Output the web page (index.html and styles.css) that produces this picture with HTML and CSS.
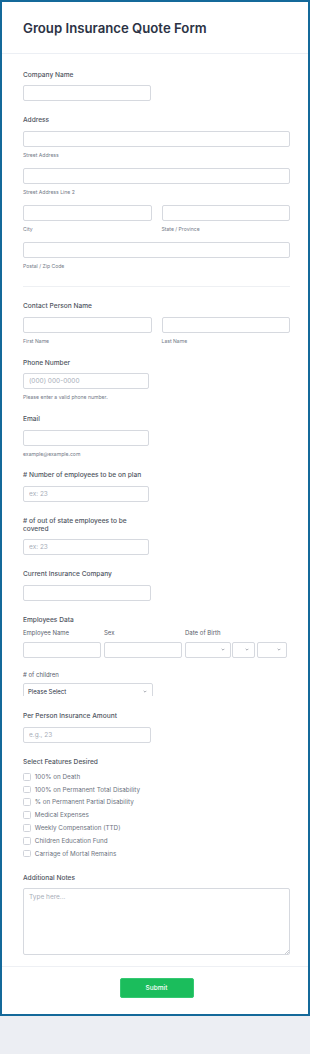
FILE: index.html
```html
<!DOCTYPE html>
<html lang="en">
<head>
<meta charset="utf-8">
<title>Group Insurance Quote Form</title>
<link rel="stylesheet" href="styles.css">
</head>
<body>
<div class="card">
  <header class="head">
    <h1 class="title">Group Insurance Quote Form</h1>
  </header>
  <main class="form">
    <div class="field first">
      <div class="label">Company Name</div>
      <input class="input w128" type="text">
    </div>

    <div class="field">
      <div class="label">Address</div>
      <div class="stack">
        <div class="cell">
          <input class="input" type="text">
          <div class="sub">Street Address</div>
        </div>
        <div class="cell">
          <input class="input" type="text">
          <div class="sub">Street Address Line 2</div>
        </div>
        <div class="cols2">
          <div class="cell">
            <input class="input" type="text">
            <div class="sub">City</div>
          </div>
          <div class="cell">
            <input class="input" type="text">
            <div class="sub">State / Province</div>
          </div>
        </div>
        <div class="cell">
          <input class="input" type="text">
          <div class="sub">Postal / Zip Code</div>
        </div>
      </div>
    </div>

    <div class="divider"></div>

    <div class="field after-divider">
      <div class="label">Contact Person Name</div>
      <div class="cols2">
        <div class="cell">
          <input class="input" type="text">
          <div class="sub">First Name</div>
        </div>
        <div class="cell">
          <input class="input" type="text">
          <div class="sub">Last Name</div>
        </div>
      </div>
    </div>

    <div class="field tight">
      <div class="label">Phone Number</div>
      <input class="input w126" type="text" placeholder="(000) 000-0000">
      <div class="sub">Please enter a valid phone number.</div>
    </div>

    <div class="field tight">
      <div class="label">Email</div>
      <input class="input w126" type="text">
      <div class="sub">example@example.com</div>
    </div>

    <div class="field tighter">
      <div class="label"># Number of employees to be on plan</div>
      <input class="input w126" type="text" placeholder="ex: 23">
    </div>

    <div class="field">
      <div class="label two"># of out of state employees to be covered</div>
      <input class="input w126" type="text" placeholder="ex: 23">
    </div>

    <div class="field">
      <div class="label">Current Insurance Company</div>
      <input class="input w128" type="text">
    </div>

    <div class="field">
      <div class="label flush">Employees Data</div>
      <div class="emp-head">
        <span class="eh-name">Employee Name</span>
        <span class="eh-sex">Sex</span>
        <span class="eh-dob">Date of Birth</span>
      </div>
      <div class="emp-row">
        <input class="input e-name" type="text">
        <input class="input e-sex" type="text">
        <div class="sel e-d1"><svg class="chev" width="4" height="3" viewBox="0 0 6 4"><path d="M1 1l2 2 2-2" fill="none" stroke="#7a808c" stroke-width="1"/></svg></div>
        <div class="sel e-d2"><svg class="chev" width="4" height="3" viewBox="0 0 6 4"><path d="M1 1l2 2 2-2" fill="none" stroke="#7a808c" stroke-width="1"/></svg></div>
        <div class="sel e-d3"><svg class="chev" width="4" height="3" viewBox="0 0 6 4"><path d="M1 1l2 2 2-2" fill="none" stroke="#7a808c" stroke-width="1"/></svg></div>
      </div>
      <div class="small-label">&#35; of children</div>
      <div class="clip">
        <div class="sel w130 select-full">
          <span class="sel-text">Please Select</span>
          <svg class="chev" width="4" height="3" viewBox="0 0 6 4"><path d="M1 1l2 2 2-2" fill="none" stroke="#7a808c" stroke-width="1"/></svg>
        </div>
      </div>
    </div>

    <div class="field loose">
      <div class="label">Per Person Insurance Amount</div>
      <input class="input w128" type="text" placeholder="e.g., 23">
    </div>

    <div class="field">
      <div class="label flush">Select Features Desired</div>
      <div class="checks">
        <label class="check"><span class="box"></span>100% on Death</label>
        <label class="check"><span class="box"></span>100% on Permanent Total Disability</label>
        <label class="check"><span class="box"></span>% on Permanent Partial Disability</label>
        <label class="check"><span class="box"></span>Medical Expenses</label>
        <label class="check"><span class="box"></span>Weekly Compensation (TTD)</label>
        <label class="check"><span class="box"></span>Children Education Fund</label>
        <label class="check"><span class="box"></span>Carriage of Mortal Remains</label>
      </div>
    </div>

    <div class="field tight">
      <div class="label">Additional Notes</div>
      <div class="notes-wrap">
        <textarea class="notes" placeholder="Type here..."></textarea>
        <svg class="grip" width="5" height="5" viewBox="0 0 5 5"><path d="M1 5L5 1M3 5L5 3" stroke="#b3b7c0" stroke-width="0.7"/></svg>
      </div>
    </div>
  </main>
  <footer class="foot">
    <button class="submit" type="button">Submit</button>
  </footer>
</div>
</body>
</html>
```

FILE: styles.css
```css
* {
  box-sizing: border-box;
}

html,
body {
  margin: 0;
  padding: 0;
}

body {
  background: #eceef3;
  font-family: Inter, "Noto Sans", "Liberation Sans", sans-serif;
  height: 1054px;
}

.card {
  background: #ffffff;
  border: 2px solid #14699a;
  height: 1016px;
  display: flex;
  flex-direction: column;
}

.head {
  height: 52px;
  border-bottom: 1px solid #eceff4;
  padding-left: 21px;
  display: flex;
  align-items: center;
}

.title {
  margin: 0;
  font-size: 13.2px;
  line-height: 16px;
  font-weight: 600;
  color: #2c3345;
}

.form {
  padding: 0 18px 0 21px;
}

.field {
  margin-top: 15px;
}

.field.first {
  margin-top: 16.5px;
}

.field.after-divider {
  margin-top: 15.8px;
}

.field.tight {
  margin-top: 14px;
}

.field.tighter {
  margin-top: 13.5px;
}

.field.loose {
  margin-top: 16px;
}

.label {
  font-size: 6.6px;
  line-height: 9px;
  font-weight: 500;
  color: #4f5561;
  margin-bottom: 5.5px;
}

.label.two {
  width: 126px;
  line-height: 8.4px;
}

.label.flush {
  margin-bottom: 0;
}

.input {
  display: block;
  width: 100%;
  height: 16px;
  margin: 0;
  border: 1px solid #d6d9df;
  border-radius: 2px;
  background: #ffffff;
  font-family: inherit;
  font-size: 6.5px;
  color: #2c3345;
  padding: 0 5px;
  outline: none;
}

.input::placeholder,
.notes::placeholder {
  color: #a7adb8;
}

.w128 {
  width: 128px;
}

.w126 {
  width: 126px;
}

.w130 {
  width: 130px;
}

.sub {
  font-size: 5.1px;
  line-height: 8px;
  margin-top: 4px;
  color: #737a88;
}

.stack {
  display: flex;
  flex-direction: column;
  gap: 9px;
}

.cols2 {
  display: grid;
  grid-template-columns: 1fr 1fr;
  column-gap: 10px;
}

.divider {
  height: 1px;
  background: #eef0f3;
  margin-top: 16px;
}

.emp-head {
  display: flex;
  margin-top: 4.8px;
  font-size: 6px;
  line-height: 8px;
  color: #5a606c;
}

.eh-name,
.eh-sex {
  width: 81px;
}

.emp-row {
  display: flex;
  margin-top: 4.3px;
}

.emp-row .input {
  height: 16.4px;
}

.emp-row .e-name {
  width: 77.7px;
  margin-right: 3.3px;
}

.emp-row .e-sex {
  width: 77.7px;
  margin-right: 3.6px;
}

.sel {
  height: 16.4px;
  border: 1px solid #d6d9df;
  border-radius: 2px;
  background: #ffffff;
  display: flex;
  align-items: center;
  justify-content: flex-end;
  padding-right: 4.6px;
  flex: none;
}

.e-d1 {
  width: 45.4px;
  margin-right: 1.6px;
}

.e-d2 {
  width: 22.4px;
  margin-right: 2.6px;
}

.e-d3 {
  width: 29.4px;
}

.chev {
  display: block;
}

.small-label {
  margin-top: 12.7px;
  font-size: 6px;
  line-height: 8px;
  color: #5a606c;
}

.clip {
  margin-top: 4.3px;
  height: 13.4px;
  overflow: hidden;
}

.select-full {
  height: 17px;
  justify-content: space-between;
  padding-left: 4px;
}

.sel-text {
  font-size: 6px;
  color: #2c3345;
}

.checks {
  margin-top: 3.4px;
}

.check {
  display: flex;
  align-items: center;
  gap: 4px;
  height: 12.8px;
  font-size: 6.3px;
  color: #6d7380;
}

.box {
  width: 7.8px;
  height: 7.8px;
  border: 1px solid #d0d3da;
  border-radius: 1.5px;
  background: #ffffff;
  flex: none;
}

.notes-wrap {
  position: relative;
}

.notes {
  display: block;
  width: 100%;
  height: 66.6px;
  margin: 0;
  resize: none;
  border: 1px solid #d6d9df;
  border-radius: 2px;
  padding: 3.5px 5px;
  font-family: inherit;
  font-size: 6.5px;
  line-height: 8px;
  color: #2c3345;
  outline: none;
}

.grip {
  position: absolute;
  right: 1.5px;
  bottom: 1.5px;
}

.foot {
  margin-top: 11.4px;
  border-top: 1px solid #eef0f4;
  padding: 11px 18px 0 21px;
  display: flex;
  justify-content: center;
}

.submit {
  width: 74px;
  height: 19.6px;
  border: 1px solid #35c972;
  border-radius: 2px;
  background: #1bbd5c;
  color: #ffffff;
  font-family: inherit;
  font-size: 6.5px;
  font-weight: 500;
  padding: 0;
}
```
